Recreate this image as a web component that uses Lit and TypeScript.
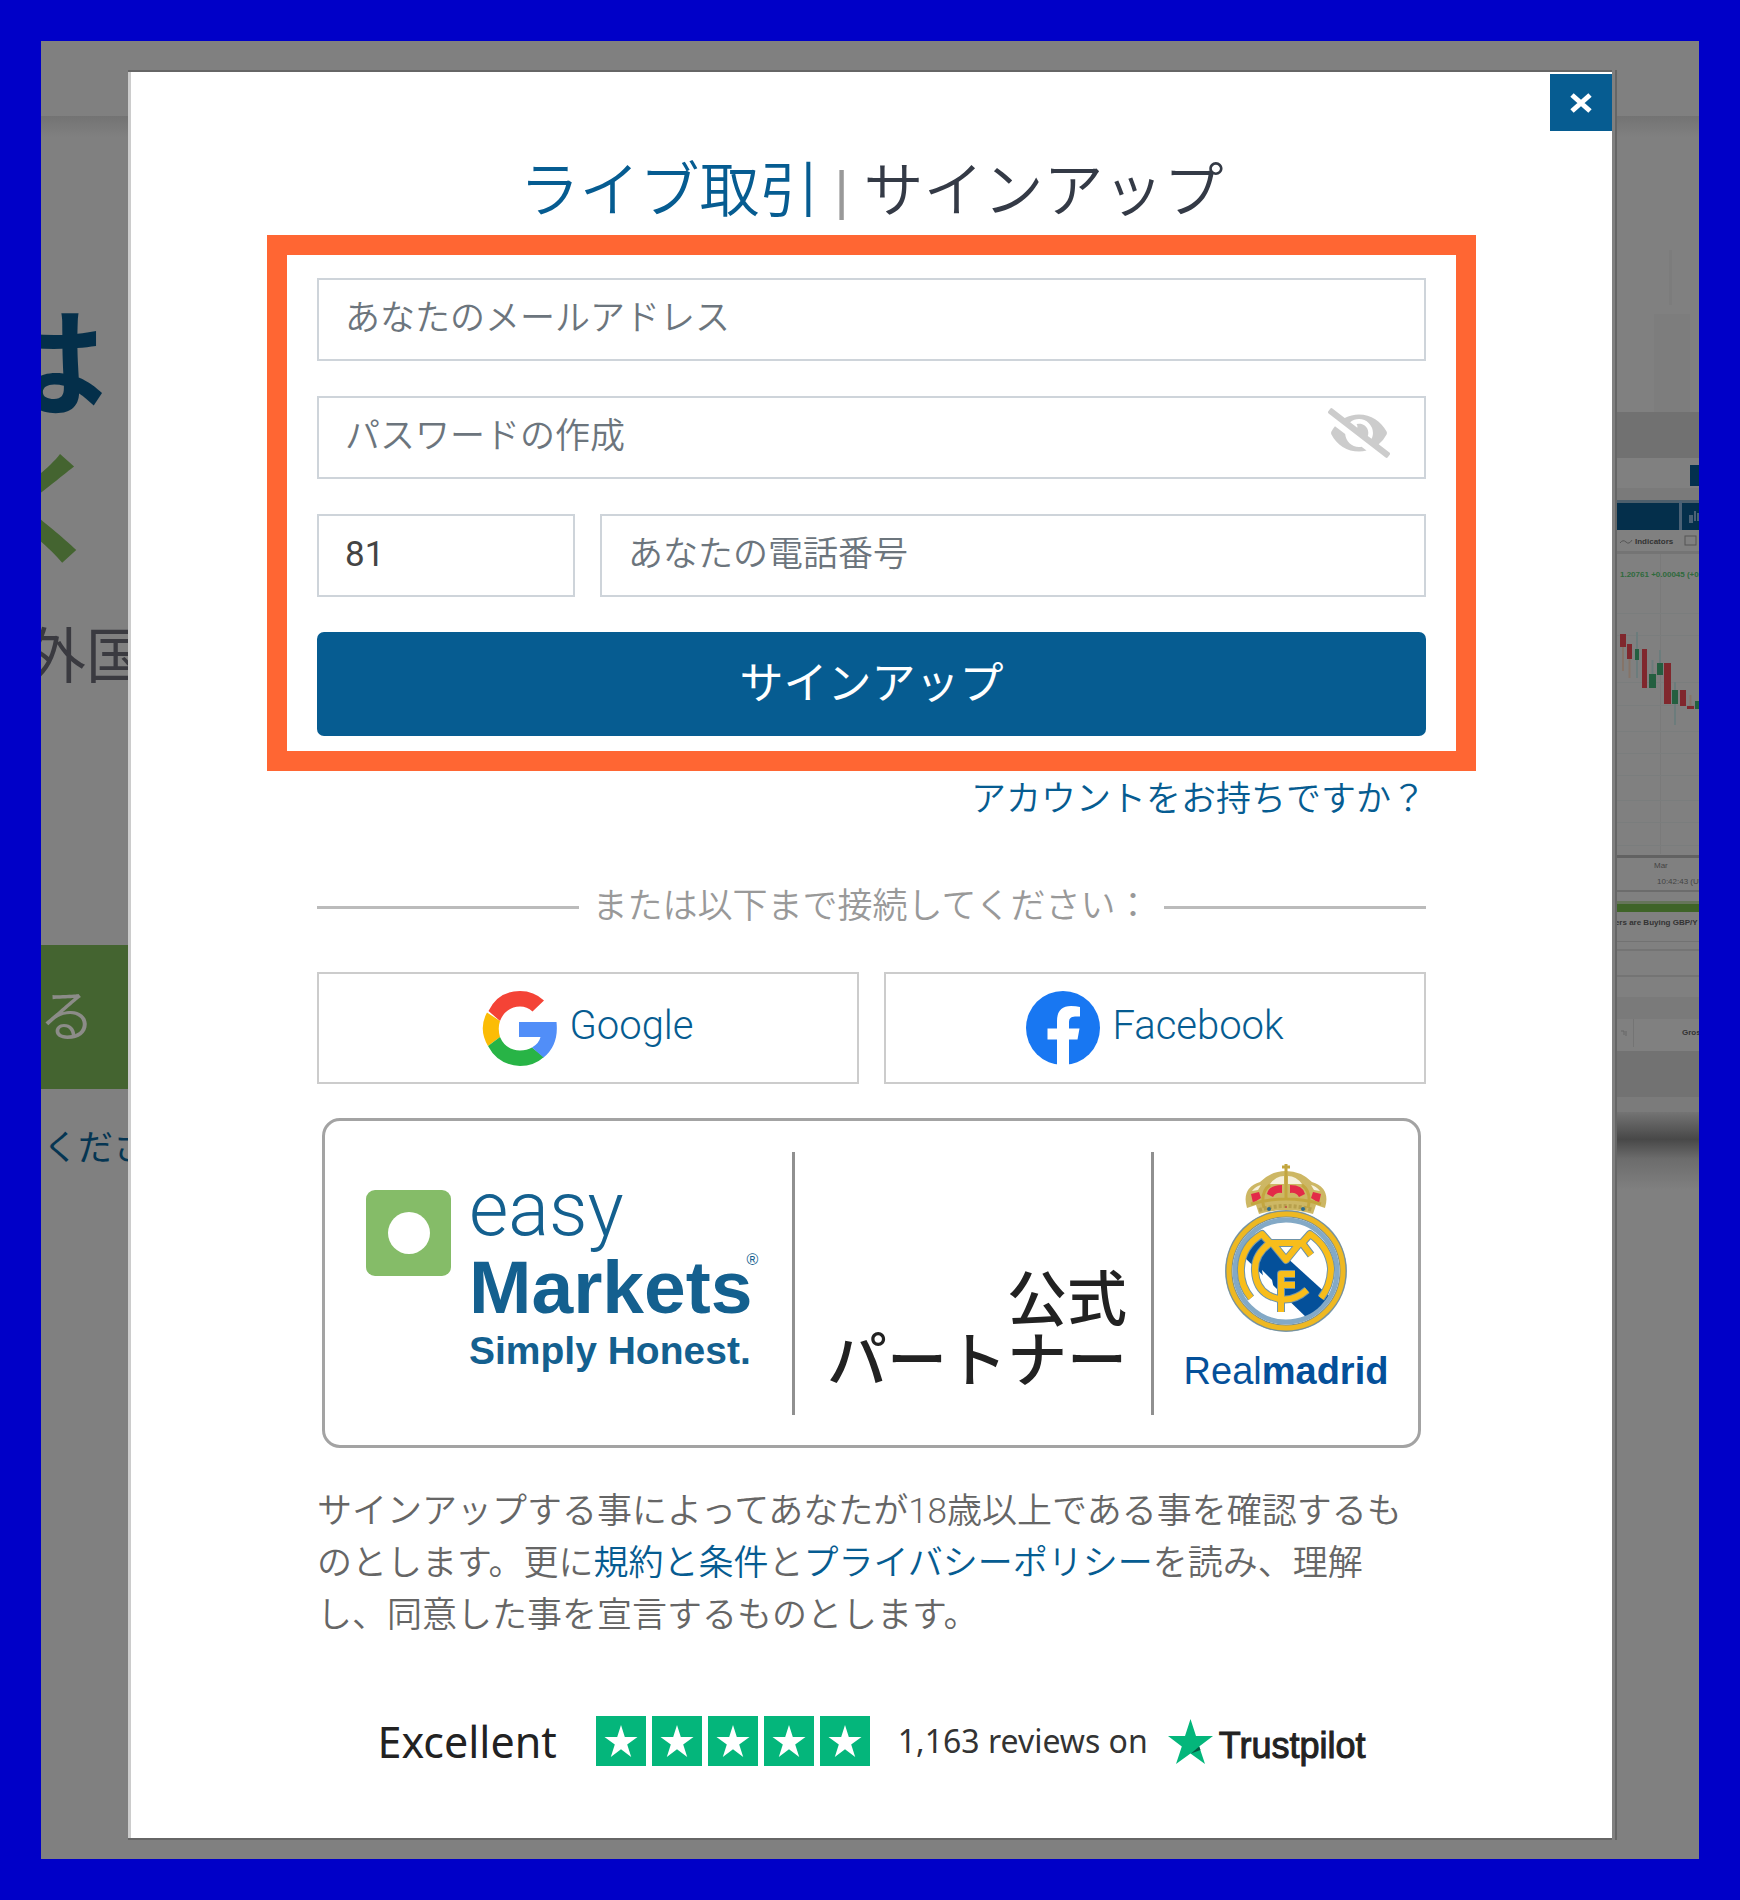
import { LitElement, html, svg, css } from "lit";
import { customElement } from "lit/decorators.js";

const STAR = "M25 9l3.800 12h12.700L31.200 28.400 35.200 41 25 33.200 14.800 41l4-12.600L8.500 21h12.700z";

interface Candle {
  x: number;
  w: number;
  top: number;
  bottom: number;
  up: boolean;
  wick?: [number, number];
}

const CANDLES: Candle[] = [
  { x: 0, w: 5, top: 595, bottom: 633, up: true },
  { x: 8, w: 6, top: 593, bottom: 606, up: false, wick: [606, 630] },
  { x: 15, w: 5, top: 603, bottom: 618, up: false, wick: [618, 637] },
  { x: 23, w: 4, top: 608, bottom: 619, up: true, wick: [591, 637] },
  { x: 30, w: 5, top: 608, bottom: 647, up: false },
  { x: 37, w: 7, top: 633, bottom: 647, up: true, wick: [619, 633] },
  { x: 45, w: 6, top: 622, bottom: 634, up: true, wick: [609, 622] },
  { x: 52, w: 7, top: 622, bottom: 663, up: false },
  { x: 60, w: 6, top: 649, bottom: 663, up: true, wick: [641, 684] },
  { x: 68, w: 6, top: 649, bottom: 665, up: false },
  { x: 75, w: 7, top: 665, bottom: 668, up: false, wick: [654, 665] },
  { x: 83, w: 4, top: 660, bottom: 668, up: true },
];

const GRID_ROWS = [572, 594, 641, 664, 690, 712, 734, 759, 781, 804];

@customElement("trading-preview")
class TradingPreview extends LitElement {
  static styles = css`
    :host { display: block; }
    .chart { display: block; font-family: "Liberation Sans", sans-serif; font-size: 8px; }
    .strong { font-weight: 700; fill: #333; }
    .soft { fill: #444; }
    .price { fill: #2f6a3c; font-weight: 700; }
  `;

  render() {
    return html`
      <svg class="chart" width="87" height="1180" viewBox="0 0 87 1180" aria-hidden="true">
        <defs>
          <linearGradient id="base" x1="0" y1="0" x2="0" y2="1">
            <stop offset="0" stop-color="#747474"></stop>
            <stop offset="0.35" stop-color="#484848"></stop>
            <stop offset="0.6" stop-color="#6c6c6c"></stop>
            <stop offset="1" stop-color="#808080"></stop>
          </linearGradient>
        </defs>
        <rect x="57" y="209" width="3" height="55" fill="#7c7c7c"></rect>
        <rect x="42" y="273" width="36" height="98" fill="#7d7d7d"></rect>
        <rect y="371" width="87" height="46" fill="#717171"></rect>
        <rect x="78" y="424" width="9" height="21" fill="#03304e"></rect>
        <rect y="447" width="87" height="13" fill="#7a7a7a"></rect>
        <rect y="459" width="87" height="3" fill="#4d5f6c"></rect>
        <rect y="462" width="87" height="27" fill="#042f4b"></rect>
        <rect x="67" y="460" width="3" height="29" fill="#4a6175"></rect>
        <path d="M77 474h4v8h-4zM82 470h2v10h-2zM85 472h2v8h-2z" fill="#4a6175"></path>
        <path d="M8 502q3-4 6-1t6-2" fill="none" stroke="#555"></path>
        <text class="strong" x="23" y="503">Indicators</text>
        <rect x="73" y="495" width="11" height="9" fill="none" stroke="#555"></rect>
        <rect y="510" width="87" height="3" fill="#747474"></rect>
        <rect x="48" y="513" width="1" height="300" fill="#7a7a7a"></rect>
        ${GRID_ROWS.map((y) => svg`<rect y=${y} width="87" height="1" fill="#7a7d7d"></rect>`)}
        <text class="price" x="8" y="536">1.20761 +0.00045 (+0.03</text>
        ${CANDLES.map(
          (c) => svg`
            ${c.wick
              ? svg`<rect x=${c.x + c.w / 2 - 1} y=${c.wick[0]} width="2" height=${c.wick[1] - c.wick[0]}
                  fill=${c.up ? "#6c7c7c" : "#857468"}></rect>`
              : null}
            <rect x=${c.x} y=${c.top} width=${c.w} height=${c.bottom - c.top}
              fill=${c.up ? "#245f40" : "#80272d"}></rect>`
        )}
        <rect y="814" width="87" height="3" fill="#626262"></rect>
        <text class="soft" x="42" y="827">Mar</text>
        <text class="soft" x="45" y="843">10:42:43 (UTC)</text>
        <rect y="849" width="87" height="2" fill="#6c6c6c"></rect>
        <rect y="860" width="87" height="3" fill="#66755a"></rect>
        <rect y="863" width="87" height="8" fill="#3f6428"></rect>
        <text class="strong" x="-14" y="884">Traders are Buying GBP/Y</text>
        <rect y="900" width="87" height="1" fill="#727272"></rect>
        <rect y="908" width="87" height="2" fill="#747474"></rect>
        <rect y="934" width="87" height="2" fill="#747474"></rect>
        <rect y="956" width="87" height="22" fill="#7a7a7a"></rect>
        <rect x="21" y="978" width="1" height="28" fill="#747474"></rect>
        <path d="M9 990h3v4M14 990v5" fill="none" stroke="#666"></path>
        <text class="strong" x="70" y="994">Gross</text>
        <rect y="1010" width="87" height="46" fill="#727272"></rect>
        <rect y="1056" width="87" height="15" fill="#7b7b7b"></rect>
        <rect y="1071" width="87" height="78" fill="url(#base)"></rect>
      </svg>
    `;
  }
}

@customElement("club-crest")
class ClubCrest extends LitElement {
  static styles = css`
    :host { display: block; }
    .crest { display: block; }
  `;

  render() {
    return html`
      <svg class="crest" width="122" height="168" viewBox="0 0 122 168" aria-hidden="true">
        <defs>
          <clipPath id="disc"><circle cx="61" cy="107" r="49"></circle></clipPath>
        </defs>
        <circle cx="61" cy="107" r="61" fill="#7fa6c4"></circle>
        <circle cx="61" cy="107" r="57" fill="#fff" stroke="#7c8f8f" stroke-width="7"></circle>
        <circle cx="61" cy="107" r="57" fill="none" stroke="#eeb822" stroke-width="5"></circle>
        <circle cx="61" cy="107" r="51" fill="#fff" stroke="#83a9c6" stroke-width="5"></circle>
        <g clip-path="url(#disc)">
          <path d="M18 92L38 72L104 132L84 156Z" fill="#04509a"></path>
          <path d="M37 106q1 14 12 19l-2-9z" fill="#fff"></path>
        </g>
        <g fill="none" stroke-linecap="butt" stroke-linejoin="round">
          <g stroke="#6f93a8" stroke-width="8">
            <path d="M26 134Q15 121 16 104Q17 82 37 70L45 79H77L85 70Q104 83 106 104Q106 121 96 134"></path>
            <path d="M45 79Q29 91 30 107Q31 124 43 131Q64 142 82 126"></path>
            <path d="M77 79L86 91M48 80L61 96L74 80"></path>
            <path d="M56 148V110H70M57 121H70"></path>
          </g>
          <g stroke="#f8bd1b" stroke-width="6">
            <path d="M26 134Q15 121 16 104Q17 82 37 70L45 79H77L85 70Q104 83 106 104Q106 121 96 134"></path>
            <path d="M45 79Q29 91 30 107Q31 124 43 131Q64 142 82 126"></path>
            <path d="M77 79L86 91M48 80L61 96L74 80"></path>
            <path d="M56 148V110H70M57 121H70"></path>
          </g>
        </g>
        <path d="M34 50L31 41L22 44Q16 24 35 18Q46 7 61 7Q76 7 87 18Q106 24 100 44L91 41L88 50Q61 42 34 50Z" fill="#cdb764"></path>
        <path d="M45 20q6-8 14-8v8zM77 20q-6-8-14-8v8zM27 27q4-5 9-6l-3 5zM95 27q-4-5-9-6l3 5z" fill="#f6f1dc"></path>
        <path d="M42 30q2-9 15-9v8q-6-1-9 4zM80 30q-2-9-15-9v8q6-1 9 4zM26 30l8-2 2 6-8 5zM96 30l-8-2-2 6 8 5z" fill="#e32a48"></path>
        <path d="M61 0V34M57 3h8M39 44q-4-16 6-23M83 44q4-16-6-23M26 40q35-10 70 0" fill="none" stroke="#c3a63f" stroke-width="3"></path>
        <path d="M34 46q27-8 54 0" fill="none" stroke="#b7a04c" stroke-width="4" stroke-dasharray="3 2"></path>
        <circle cx="44" cy="45" r="2" fill="#2c6a8c"></circle>
        <circle cx="78" cy="45" r="2" fill="#2c6a8c"></circle>
        <circle cx="61" cy="43" r="1" fill="#c04a4a"></circle>
      </svg>
    `;
  }
}

@customElement("app-root")
class AppRoot extends LitElement {
  static styles = css`
    :host {
      display: block;
      font-family: Roboto, "Noto Sans CJK JP", sans-serif;
      font-size: 35px;
      line-height: 52px;
      color: #666;
    }
    * { box-sizing: border-box; }
    a { color: #065c91; text-decoration: none; }
    svg { display: block; flex: none; }
    input, button { font: inherit; }

    .stage {
      display: grid;
      grid-template-columns: 87px minmax(0, 1fr) 87px;
      border: 41px solid #0000c8;
      background: linear-gradient(#737373, #808080) 0 75px / 100% 21px no-repeat #808080;
    }

    .backdrop-left { min-width: 0; overflow: hidden; }
    .backdrop-line { display: flex; justify-content: flex-end; white-space: nowrap; margin: 0; }
    .backdrop-title {
      padding: 254px 22px 0 0;
      font-size: 120px;
      line-height: 145px;
      font-weight: 700;
      color: #042f4a;
    }
    .backdrop-title.green { padding-top: 0; color: #446430; }
    .backdrop-text { padding-top: 43px; font-size: 60px; line-height: 60px; color: #3a3a40; }
    .backdrop-text span { margin-right: -18px; }
    .backdrop-action {
      margin-top: 257px;
      padding-right: 33px;
      font-size: 56px;
      font-weight: 350;
      line-height: 144px;
      color: #8c8c88;
      background: #446430;
    }
    .backdrop-note { margin-top: 34px; color: #053552; }
    .backdrop-note span { margin-right: -20px; }
    .backdrop-right { min-width: 0; overflow: hidden; }

    .modal {
      min-width: 0;
      margin: 29px 0 19px;
      border-top: 2px solid #666;
      border-bottom: 2px solid #666;
      background: #fff;
      box-shadow: inset 3px 0 #ccc, 3px 0 #808080, 5px 0 #666;
      padding-left: 3px;
      z-index: 1;
    }
    .modal-top { display: flex; justify-content: flex-end; padding-top: 2px; }
    .close {
      display: grid;
      place-items: center;
      width: 62px;
      height: 57px;
      padding: 0;
      border: 0;
      background: #065c91;
    }
    .body { padding: 0 136px 72px; }
    .inset { margin-left: 50px; margin-right: 50px; }

    .title {
      margin: 0;
      padding-top: 18px;
      font-size: 60px;
      line-height: 86px;
      font-weight: 350;
      text-align: center;
      color: #343a46;
    }
    .title .accent { color: #065c91; }
    .title .bar { color: #999; font-weight: 400; }

    .form {
      display: grid;
      grid-template-columns: 258px minmax(0, 1fr);
      gap: 35px 25px;
      padding: 23px 30px 15px;
      border: 20px solid #ff6633;
    }
    .wide { grid-column: 1 / -1; }
    .field { position: relative; display: flex; min-width: 0; }
    .input {
      width: 100%;
      min-width: 0;
      height: 83px;
      padding: 0 26px 2px;
      border: 2px solid #ced4da;
      border-radius: 0;
      background: #fff;
      color: #444;
      font-weight: 350;
      outline: none;
    }
    .input.code { font-weight: 400; }
    .input::placeholder { color: #6c757d; opacity: 1; }
    .reveal {
      position: absolute;
      right: 36px;
      top: 12px;
      padding: 0;
      border: 0;
      background: none;
      color: #ccc;
    }
    .submit {
      height: 104px;
      padding: 0;
      border: 0;
      border-radius: 7px;
      background: #065c91;
      color: #fff;
      font-size: 44px;
    }
    .login { display: flex; justify-content: flex-end; padding-top: 3px; font-weight: 350; }

    .or {
      display: flex;
      align-items: center;
      gap: 14px;
      margin-top: 55px;
      color: #999;
      font-weight: 350;
      white-space: nowrap;
    }
    .or::before, .or::after { content: ""; flex: 1; height: 3px; background: #bbb; }

    .social { display: grid; grid-template-columns: 1fr 1fr; gap: 25px; margin-top: 39px; }
    .social-button {
      display: flex;
      align-items: center;
      justify-content: center;
      gap: 12px;
      height: 112px;
      padding: 0;
      border: 2px solid #ccc;
      background: #fff;
      color: #065c91;
      font-size: 40px;
      font-weight: 350;
    }
    .social-button span { padding-bottom: 4px; }

    .partner {
      display: grid;
      grid-template-columns: 467fr 3px 356fr 3px 264fr;
      height: 330px;
      margin: 34px 55px 0;
      border: 3px solid #a3a3a3;
      border-radius: 18px;
    }
    .rule { margin: 31px 0 30px; background: #909090; }
    .brand { display: flex; gap: 18px; padding: 49px 0 0 41px; color: #14608f; }
    .mark { margin-top: 20px; }
    .brand-text { font-family: "Liberation Sans", sans-serif; font-weight: 700; white-space: nowrap; }
    .easy { font-family: Roboto, sans-serif; font-weight: 300; font-size: 76px; line-height: 78px; }
    .markets { display: flex; font-size: 75px; line-height: 78px; }
    .reg { margin-left: -6px; font-size: 16px; line-height: 24px; font-weight: 400; }
    .honest { font-size: 39px; line-height: 50px; }
    .official {
      padding: 143px 24px 0 0;
      text-align: right;
      font-family: "Noto Sans CJK JP", sans-serif;
      font-size: 60px;
      line-height: 61px;
      font-weight: 500;
      color: #222;
      white-space: nowrap;
    }
    .club {
      display: flex;
      flex-direction: column;
      align-items: center;
      gap: 16px;
      padding-top: 43px;
      font-family: "Liberation Sans", sans-serif;
      font-size: 38px;
      line-height: 46px;
      color: #04509a;
    }

    .legal { margin-top: 38px; margin-bottom: 0; font-weight: 350; }

    .trust {
      display: flex;
      align-items: center;
      justify-content: center;
      height: 50px;
      margin-top: 74px;
      font-family: "Noto Sans", sans-serif;
      color: #222;
      white-space: nowrap;
    }
    .excellent { padding-top: 2px; font-size: 43px; }
    .stars { display: flex; gap: 6px; margin: 0 28px 0 39px; }
    .reviews { font-size: 32px; color: #333; }
    .trust-logo { display: flex; align-items: center; gap: 6px; margin-left: 20px; }
    .trust-name {
      padding-top: 10px;
      font-family: "Liberation Sans", sans-serif;
      font-size: 36px;
      line-height: 42px;
      -webkit-text-stroke: 1px #222;
    }
  `;

  private tile() {
    return html`<svg width="50" height="50" viewBox="0 0 50 50" aria-hidden="true">
      <rect width="50" height="50" fill="#04b67b"></rect>
      <path d=${STAR} fill="#fff"></path>
    </svg>`;
  }

  render() {
    return html`
      <div class="stage">
        <aside class="backdrop-left">
          <p class="backdrop-line backdrop-title">は</p>
          <p class="backdrop-line backdrop-title green">く</p>
          <p class="backdrop-line backdrop-text"><span>外国</span></p>
          <p class="backdrop-line backdrop-action">る</p>
          <p class="backdrop-line backdrop-note"><span>くださ</span></p>
        </aside>

        <main class="modal">
          <div class="modal-top">
            <button class="close" type="button" aria-label="閉じる">
              <svg width="22" height="22" viewBox="0 0 22 22">
                <path d="M2 3L20 19M20 3L2 19" fill="none" stroke="#fff" stroke-width="5"></path>
              </svg>
            </button>
          </div>
          <div class="body">
            <h1 class="title">
              <span class="accent">ライブ取引</span> <span class="bar">|</span> サインアップ
            </h1>

            <form class="form" @submit=${(e: Event) => e.preventDefault()}>
              <div class="field wide">
                <input class="input" type="email" aria-label="あなたのメールアドレス" placeholder="あなたのメールアドレス" />
              </div>
              <div class="field wide">
                <input class="input" type="password" aria-label="パスワードの作成" placeholder="パスワードの作成" />
                <button class="reveal" type="button" aria-label="パスワードを表示">
                  <svg width="62" height="50" viewBox="0 0 640 512">
                    <path fill="currentColor" d="M320 400c-75.85 0-137.25-58.71-142.9-133.11L72.2 185.82c-13.79 17.3-26.48 35.59-36.72 55.59a32.35 32.35 0 0 0 0 29.19C89.71 376.41 197.07 448 320 448c26.91 0 52.87-4 77.89-10.46L346 397.39a144.13 144.13 0 0 1-26 2.61zm313.82 58.1l-110.55-85.44a331.25 331.25 0 0 0 81.25-102.07 32.35 32.35 0 0 0 0-29.19C550.29 135.59 442.93 64 320 64a308.15 308.15 0 0 0-147.32 37.7L45.46 3.37A16 16 0 0 0 23 6.18L3.37 31.45A16 16 0 0 0 6.18 53.9l588.36 454.73a16 16 0 0 0 22.46-2.81l19.64-25.27a16 16 0 0 0-2.82-22.45zm-183.72-142l-39.3-30.38A94.75 94.75 0 0 0 416 256a94.76 94.76 0 0 0-121.31-92.21A47.65 47.65 0 0 1 304 192a46.64 46.64 0 0 1-1.54 10l-73.61-56.89A142.31 142.31 0 0 1 320 112a143.92 143.92 0 0 1 144 144c0 21.63-5.29 41.79-13.9 60.11z"></path>
                  </svg>
                </button>
              </div>
              <div class="field">
                <input class="input code" type="text" inputmode="numeric" aria-label="国番号" .value=${"81"} />
              </div>
              <div class="field">
                <input class="input" type="tel" aria-label="あなたの電話番号" placeholder="あなたの電話番号" />
              </div>
              <button class="submit wide" type="submit">サインアップ</button>
            </form>

            <div class="login inset"><a href="#login">アカウントをお持ちですか？</a></div>

            <div class="or inset"><span>または以下まで接続してください：</span></div>

            <div class="social inset">
              <button class="social-button" type="button">
                <svg width="75" height="75" viewBox="0 0 75 75" aria-hidden="true">
                  <path d="M6.500 20Q16 0 38 0Q52 0 62 9.500L50.500 20.500Q45 15.500 38 15.500Q23.500 16 18 30Z" fill="#f44336"></path>
                  <path d="M5 21.500L18 30Q15.500 37.500 18 46L6 55Q-4 38 5 21.500Z" fill="#fbbc05"></path>
                  <path d="M6 55L18 46Q23.500 59 38 59.500Q45 59.500 50 56.500L62 66Q52 75 38 75Q16 74 6 55Z" fill="#28b446"></path>
                  <path d="M37 31H74.500Q77 54 61.500 66.500L50 56.500Q57 52.500 58.500 46H37Z" fill="#518ef8"></path>
                </svg>
                <span>Google</span>
              </button>
              <button class="social-button" type="button">
                <svg width="74" height="74" viewBox="0 0 74 74" aria-hidden="true">
                  <circle cx="37" cy="37" r="37" fill="#1877f2"></circle>
                  <path d="M31 74V48.500H21.500V37.500H31V30Q31 15 45 15Q50 15 54 16V25.500H49Q43 25.500 43 31V37.500H53.500L51.500 48.500H43V74Z" fill="#fff"></path>
                </svg>
                <span>Facebook</span>
              </button>
            </div>

            <section class="partner">
              <div class="brand">
                <svg class="mark" width="85" height="86" viewBox="0 0 85 86" aria-hidden="true">
                  <rect width="85" height="86" rx="9" fill="#85bc68"></rect>
                  <circle cx="43" cy="43" r="21" fill="#fff"></circle>
                </svg>
                <div class="brand-text">
                  <div class="easy">easy</div>
                  <div class="markets">Markets<span class="reg">®</span></div>
                  <div class="honest">Simply Honest.</div>
                </div>
              </div>
              <div class="rule"></div>
              <div class="official">公式<br />パートナー</div>
              <div class="rule"></div>
              <div class="club">
                <club-crest></club-crest>
                <div>Real<b>madrid</b></div>
              </div>
            </section>

            <p class="legal inset">サインアップする事によってあなたが18歳以上である事を確認するものとします。更に<a href="#terms">規約と条件</a>と<a href="#privacy">プライバシーポリシー</a>を読み、理解し、同意した事を宣言するものとします。</p>

            <div class="trust">
              <span class="excellent">Excellent</span>
              <span class="stars">${[0, 1, 2, 3, 4].map(() => this.tile())}</span>
              <span class="reviews">1,163 reviews on</span>
              <span class="trust-logo">
                <svg width="45" height="45" viewBox="0 0 45 45" aria-hidden="true">
                  <path d="M22.500 0L28 17H45L31.200 27.500L37 45L22.500 34.500L8 45L13.800 27.500L0 17H17Z" fill="#04b67b"></path>
                  <path d="M32.500 31L31.200 27.500L23 34.500Z" fill="#045a42"></path>
                </svg>
                <span class="trust-name">Trustpilot</span>
              </span>
            </div>
          </div>
        </main>

        <aside class="backdrop-right"><trading-preview></trading-preview></aside>
      </div>
    `;
  }
}
